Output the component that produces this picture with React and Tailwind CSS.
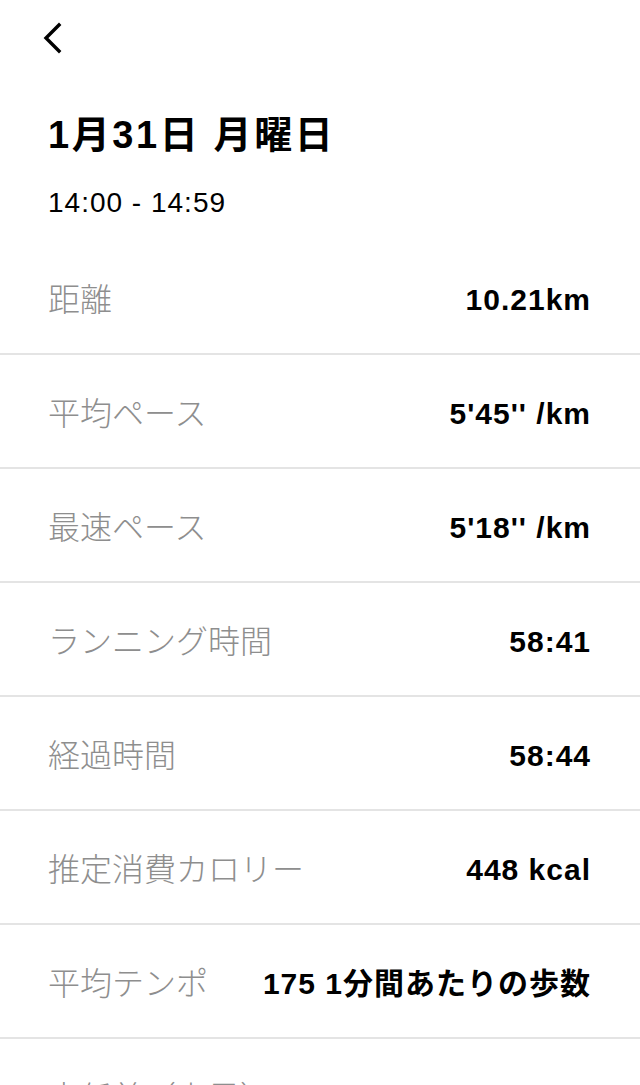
import React from "react";

const rows = [
  ["距離", "10.21km"],
  ["平均ペース", "5'45'' /km"],
  ["最速ペース", "5'18'' /km"],
  ["ランニング時間", "58:41"],
  ["経過時間", "58:44"],
  ["推定消費カロリー", "448 kcal"],
  ["平均テンポ", "175 1分間あたりの歩数"],
  ["高低差（上昇）", ""],
];

export default function App() {
  return (
    <div
      className="w-[640px] h-[1085px] overflow-hidden bg-white text-black"
      style={{ fontFamily: '"Liberation Sans", "Noto Sans CJK JP", sans-serif' }}
    >
      <div className="h-[76px] flex items-center pl-[40px]">
        <svg width="28" height="32" viewBox="0 0 28 32" fill="none">
          <polyline
            points="19,3 6,16 19,29"
            stroke="#000"
            strokeWidth="3.4"
            strokeLinecap="square"
            strokeLinejoin="miter"
          />
        </svg>
      </div>
      <h1 className="mt-[35px] pl-[48px] text-[38px] leading-[48px] font-bold tracking-[2.6px]">
        1月31日 月曜日
      </h1>
      <div className="mt-[26px] pl-[48px] text-[28px] leading-[36px] tracking-[1px]">
        14:00 - 14:59
      </div>
      <div className="mt-[20px]">
        {rows.map(([label, value]) => (
          <div
            key={label}
            className="h-[114px] flex items-center justify-between pl-[48px] pr-[49px] border-b-2 border-[#e4e4e4]"
          >
            <span
              className="text-[32px] text-[#8e8e8e] font-light"
              style={{ fontFamily: '"Noto Sans CJK JP", sans-serif' }}
            >
              {label}
            </span>
            <span className="mt-[4px] text-[30px] font-bold tracking-[1px]">{value}</span>
          </div>
        ))}
      </div>
    </div>
  );
}
